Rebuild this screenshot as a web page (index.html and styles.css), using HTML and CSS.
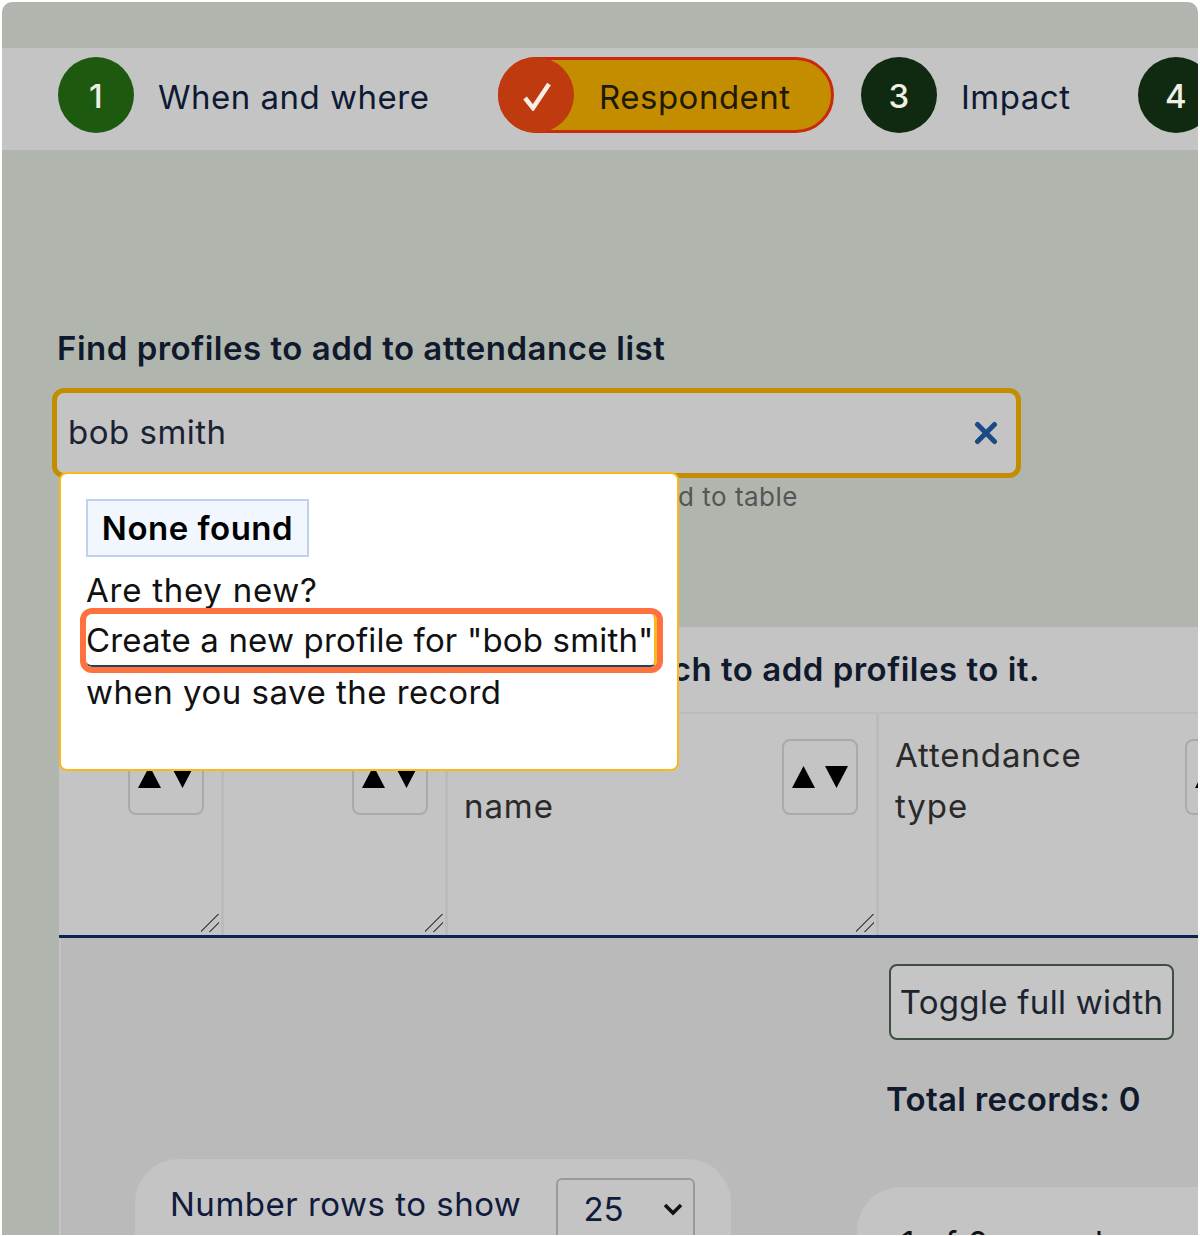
FILE: index.html
```html
<!DOCTYPE html>
<html lang="en">

<head>
    <meta charset="UTF-8">
    <meta name="viewport" content="width=device-width, initial-scale=1.0">
    <title>Find profiles</title>
    <link rel="stylesheet" href="styles.css">
</head>

<body>
    <div class="screen">
        <!-- Steps -->
        <nav class="steps">
            <div class="step step-one">
                <span class="step-num num-green">1</span>
                <span class="step-label">When and where</span>
            </div>
            <div class="step-current">
                <span class="step-num num-red">
                    <svg width="30" height="30" viewBox="0 0 30 30"><path d="M4 17l8 10L28 3" fill="none" stroke="#f4efe6" stroke-width="4.5"/></svg>
                </span>
                <span class="step-label">Respondent</span>
            </div>
            <div class="step step-three">
                <span class="step-num num-dark">3</span>
                <span class="step-label">Impact</span>
            </div>
            <span class="step-num num-dark">4</span>
        </nav>

        <!-- Search -->
        <section class="finder">
            <label class="finder-label">Find profiles to add to attendance list</label>
            <div class="search-box">
                <span class="search-text">bob smith</span>
                <svg width="24" height="24" viewBox="0 0 24 24"><path d="M3.500 3.500l17 17M20.500 3.500l-17 17" fill="none" stroke="#1c4a86" stroke-width="5" stroke-linecap="round"/></svg>
            </div>
            <p class="finder-hint">Select a profile and it will be added to table</p>

            <div class="popup">
                <div class="none-found">None found</div>
                <p class="popup-ask">Are they new?</p>
                <a class="create-link">Create a new profile for "bob smith"</a>
                <p>when you save the record</p>
            </div>
        </section>

        <!-- Table -->
        <section class="panel">
            <p class="panel-title">Start a new list, then search to add profiles to it.</p>
            <div class="table-head">
                <div class="col col-a">
                    <button class="sort">
                        <svg width="56" height="22" viewBox="0 0 56 22"><path d="M0 22L11.500 0 23 22zM33 0h23L44.500 22z"/></svg>
                    </button>
                    <i class="grip"></i>
                </div>
                <div class="col col-b">
                    <button class="sort">
                        <svg width="56" height="22" viewBox="0 0 56 22"><path d="M0 22L11.500 0 23 22zM33 0h23L44.500 22z"/></svg>
                    </button>
                    <i class="grip"></i>
                </div>
                <div class="col col-c">
                    <span class="col-name">Preferred<br>name</span>
                    <button class="sort">
                        <svg width="56" height="22" viewBox="0 0 56 22"><path d="M0 22L11.500 0 23 22zM33 0h23L44.500 22z"/></svg>
                    </button>
                    <i class="grip"></i>
                </div>
                <div class="col col-d">
                    <span class="col-name">Attendance<br>type</span>
                    <button class="sort">
                        <svg width="56" height="22" viewBox="0 0 56 22"><path d="M0 22L11.500 0 23 22zM33 0h23L44.500 22z"/></svg>
                    </button>
                </div>
            </div>
            <div class="table-foot">
                <div class="foot-right">
                    <button class="toggle">Toggle full width</button>
                    <p class="total">Total records: 0</p>
                </div>
                <div class="foot-row">
                    <div class="rows-pill">
                        <span>Number rows to show</span>
                        <div class="rows-select">25
                            <svg width="22" height="14" viewBox="0 0 22 14"><path d="M3 3l8 8 8-8" fill="none" stroke="#111" stroke-width="3.500"/></svg>
                        </div>
                    </div>
                    <div class="pager-pill">1 of 0 records</div>
                </div>
            </div>
        </section>
    </div>
</body>

</html>
```
FILE: styles.css
```css
* {
    margin: 0;
    padding: 0;
    box-sizing: border-box;
}

html, body {
    height: 100%;
    overflow: hidden;
    background: white;
    font-family: Inter, "Noto Sans", sans-serif;
    letter-spacing: 0.5px;
    color: #111;
}

.screen {
    height: 1233px;
    margin: 2px 2px 0;
    padding-top: 46px;
    background: #b0b6ae;
    border-radius: 10px 10px 0 0;
    overflow: hidden;
}

/* Steps */
.steps {
    height: 102px;
    background: #c4c4c4;
    padding: 0 0 8px 56px;
    display: flex;
    align-items: center;
    font-size: 33px;
    white-space: nowrap;
}

.step {
    display: flex;
    align-items: center;
    gap: 24px;
    flex: none;
}

.step-one {
    width: 440px;
}

.step-three {
    width: 277px;
}

.step-label {
    padding-top: 3px;
    color: #0e1a33;
}

.step-num {
    width: 76px;
    height: 76px;
    padding-top: 1px;
    flex: none;
    border-radius: 50%;
    display: flex;
    align-items: center;
    justify-content: center;
    color: #f0efe6;
    font-weight: 500;
}

.num-green {
    background: #1d5a0f;
}

.num-dark {
    background: #0f2a10;
}

.num-red {
    background: #bf3a0e;
    margin: -3px 0 -3px -3px;
}

.step-current {
    width: 336px;
    height: 76px;
    margin-right: 27px;
    flex: none;
    display: flex;
    align-items: center;
    gap: 25px;
    background: #c48d00;
    border: 3px solid #c92a0c;
    border-radius: 38px;
}

.step-current .step-label {
    color: #1e1a05;
}

/* Search */
.finder {
    position: relative;
    height: 477px;
    padding: 178px 0 0 50px;
}

.finder-label {
    display: block;
    margin: 0 0 20px 5px;
    font-size: 33px;
    font-weight: 600;
    line-height: 40px;
    color: #101a2c;
}

.search-box {
    width: 969px;
    height: 90px;
    padding: 0 18px 0 11px;
    display: flex;
    align-items: center;
    justify-content: space-between;
    font-size: 33px;
    color: #1a2233;
    background: #c4c4c4;
    border: 5px solid #c48d00;
    border-radius: 12px;
}

.search-text {
    margin-top: -2px;
}

.finder-hint {
    margin-top: 3px;
    width: 746px;
    text-align: right;
    font-size: 26px;
    line-height: 32px;
    color: #555;
}

.popup {
    position: absolute;
    z-index: 2;
    left: 57px;
    top: 322px;
    width: 620px;
    height: 299px;
    padding: 25px 0 0 25px;
    background: white;
    border: 2px solid #fbb81c;
    border-radius: 8px;
    font-size: 33px;
    line-height: 51px;
}

.none-found {
    width: 223px;
    height: 58px;
    margin-bottom: 8px;
    line-height: 54px;
    text-align: center;
    font-weight: 600;
    color: black;
    background: #f2f7ff;
    border: 2px solid #bcd2ef;
}

.popup-ask {
    letter-spacing: 0.75px;
}

/* Orange marker over the link */
.create-link {
    display: block;
    width: fit-content;
    margin-top: -2px;
    padding-top: 2px;
    line-height: 49px;
    white-space: nowrap;
    letter-spacing: 0.17px;
    border-bottom: 2px solid #1a4a5a;
    border-right: 3px solid #fbb81c;
    outline: 6px solid #ff7240;
    border-radius: 6px;
}

/* Table */
.panel {
    margin-left: 57px;
    height: 607px;
    background: #c4c4c4;
}

.panel-title {
    width: 981px;
    height: 85px;
    padding-top: 22px;
    text-align: right;
    font-size: 33px;
    font-weight: 600;
    line-height: 40px;
    white-space: nowrap;
    color: #101a2c;
}

.table-head {
    display: flex;
    height: 226px;
    border-top: 2px solid #bcbcbc;
    border-bottom: 3px solid #0b2350;
    font-size: 33px;
    line-height: 51px;
    color: #2a2a2a;
}

.col {
    position: relative;
    flex: none;
    padding: 16px 18px 0 16px;
    border-right: 3px solid #bbb;
    display: flex;
    justify-content: space-between;
    align-items: flex-start;
}

.col-name {
    letter-spacing: 0.9px;
}

.col-a {
    width: 165px;
    padding-right: 17px;
    justify-content: flex-end;
}

.col-b {
    width: 224px;
    padding-right: 17px;
    justify-content: flex-end;
}

.col-c {
    width: 431px;
}

.col-d {
    width: 400px;
    border-right: 0;
}

.sort {
    width: 76px;
    height: 76px;
    margin-top: 9px;
    display: flex;
    align-items: center;
    justify-content: center;
    background: transparent;
    border: 2px solid #aaa;
    border-radius: 8px;
}

/* Column resize handle */
.grip {
    position: absolute;
    right: 2px;
    bottom: 3px;
    width: 18px;
    height: 18px;
    background: linear-gradient(135deg, transparent 45%, #555 45%, #555 52%, transparent 52%, transparent 70%, #555 70%, #555 77%, transparent 77%);
}

.table-foot {
    height: 300px;
    background: #bababa;
    border-left: 2px solid #c4c4c4;
    padding-top: 26px;
    font-size: 33px;
}

.foot-right {
    margin-left: 828px;
}

.toggle {
    width: 285px;
    height: 76px;
    font-family: inherit;
    font-size: 33px;
    letter-spacing: 0.3px;
    color: #1c2430;
    background: #c5c5c5;
    border: 2px solid #3f4f3f;
    border-radius: 8px;
}

.total {
    margin-top: 39px;
    margin-left: -3px;
    font-weight: 600;
    letter-spacing: 0.3px;
    line-height: 40px;
    color: #101a2c;
}

.foot-row {
    display: flex;
    align-items: flex-start;
    margin-top: 40px;
    padding-left: 74px;
}

.rows-pill {
    width: 596px;
    height: 120px;
    flex: none;
    padding: 20px 0 0 35px;
    display: flex;
    align-items: flex-start;
    gap: 35px;
    background: #c4c4c4;
    border-radius: 44px;
    color: #101a3c;
    line-height: 50px;
}

.rows-select {
    width: 139px;
    height: 62px;
    margin-top: -1px;
    padding: 0 9px 0 25px;
    display: flex;
    justify-content: space-between;
    align-items: center;
    letter-spacing: 0;
    border: 2px solid #999;
    border-radius: 6px;
}

.pager-pill {
    width: 400px;
    height: 100px;
    flex: none;
    margin: 28px 0 0 126px;
    padding: 36px 0 0 44px;
    background: #c4c4c4;
    border-radius: 44px;
    white-space: nowrap;
}
```
